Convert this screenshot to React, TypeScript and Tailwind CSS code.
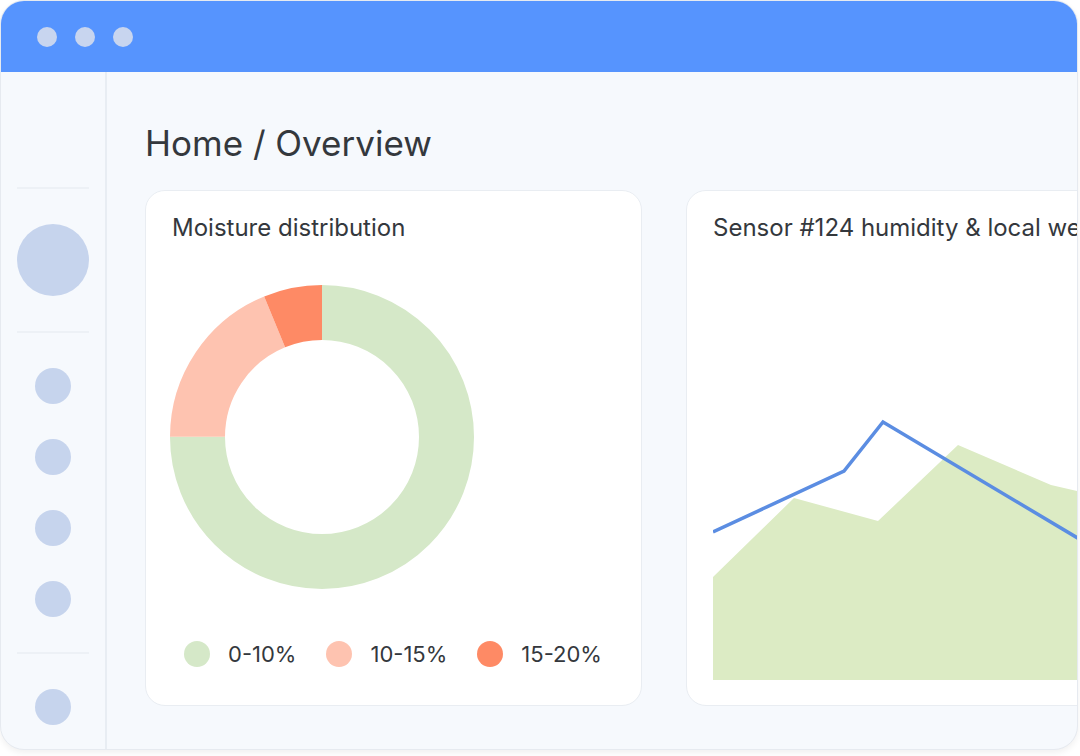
const font = { fontFamily: "Inter, 'Noto Sans', sans-serif" };

const R = 124.5;
const C = 2 * Math.PI * R;

const slices = [
  { color: "#d5e8c8", from: 0, to: 0.75 },
  { color: "#fec3b0", from: 0.75, to: 0.9375 },
  { color: "#fe8a65", from: 0.9375, to: 1 },
];

const legend = [
  { label: "0-10%", color: "bg-[#d5e8c8]" },
  { label: "10-15%", color: "bg-[#fec3b0]" },
  { label: "15-20%", color: "bg-[#fe8a65]" },
];

function Donut() {
  return (
    <svg width="304" height="304" viewBox="0 0 304 304" className="-ml-[2px]">
      <g transform="rotate(-90 152 152)">
        {slices.map((s) => (
          <circle
            key={s.color}
            cx="152"
            cy="152"
            r={R}
            fill="none"
            stroke={s.color}
            strokeWidth="55"
            strokeDasharray={`${(s.to - s.from) * C} ${C}`}
            strokeDashoffset={-s.from * C}
          />
        ))}
      </g>
    </svg>
  );
}

function AreaChart() {
  return (
    <svg width="445" height="420" viewBox="0 0 445 420" className="block">
      <polygon
        points="0,317 81,238 165,261 245,185 338,225 368,232 445,250 445,420 0,420"
        fill="#dcebc4"
      />
      <polyline
        points="0,272 131,211 170,162 368,280 445,326"
        fill="none"
        stroke="#5b8de2"
        strokeWidth="3.5"
      />
    </svg>
  );
}

function Divider() {
  return <div className="h-[2px] w-[72px] bg-[#edf1f6]" />;
}

function Dot() {
  return <div className="h-9 w-9 rounded-full bg-[#c6d4ed]" />;
}

export default function App() {
  return (
    <div className="h-[756px] w-[1080px] bg-white" style={font}>
      <div className="flex h-[750px] w-[1078px] flex-col overflow-hidden rounded-[24px] border border-[#e6eaf0] bg-[#f6f9fd] shadow-[0_3px_6px_rgba(0,0,0,0.06)]">
        {/* title bar */}
        <div className="flex h-[71px] shrink-0 items-center gap-[18px] bg-[#5694fe] pl-[36px]">
          <div className="h-5 w-5 rounded-full bg-[#c8d5ef]" />
          <div className="h-5 w-5 rounded-full bg-[#c8d5ef]" />
          <div className="h-5 w-5 rounded-full bg-[#c8d5ef]" />
        </div>

        <div className="flex flex-1">
          {/* sidebar */}
          <aside className="flex w-[106px] shrink-0 flex-col items-center gap-[35px] border-r-2 border-[#e8edf3] pt-[115px]">
            <Divider />
            <div className="h-[72px] w-[72px] rounded-full bg-[#c6d4ed]" />
            <Divider />
            <Dot />
            <Dot />
            <Dot />
            <Dot />
            <Divider />
            <Dot />
          </aside>

          {/* main */}
          <main className="min-w-0 flex-1 overflow-hidden pl-[38px] pt-[49px]">
            <h1 className="text-[35px] leading-[44px] text-[#34383d]">Home / Overview</h1>

            <div className="mt-[25px] flex gap-[44px]">
              <section className="flex h-[516px] w-[497px] shrink-0 flex-col rounded-[20px] border border-[#e9edf2] bg-white px-[26px] pt-[22px]">
                <h2 className="text-[24px] leading-[30px] text-[#34383d]">Moisture distribution</h2>
                <div className="mt-[42px]">
                  <Donut />
                </div>
                <div className="ml-[12px] mt-[52px] flex items-center">
                  {legend.map((l, i) => (
                    <div key={l.label} className={`flex items-center gap-[18px] ${i > 0 ? "ml-[30px]" : ""}`}>
                      <div className={`h-[26px] w-[26px] rounded-full ${l.color}`} />
                      <span className="text-[22px] leading-[26px] text-[#34383d]">{l.label}</span>
                    </div>
                  ))}
                </div>
              </section>

              <section className="flex h-[516px] w-[497px] shrink-0 flex-col rounded-[20px] border border-[#e9edf2] bg-white px-[26px] pb-[25px] pt-[22px]">
                <h2 className="whitespace-nowrap text-[24px] leading-[30px] text-[#34383d]">
                  Sensor #124 humidity &amp; local weather
                </h2>
                <div className="mt-auto">
                  <AreaChart />
                </div>
              </section>
            </div>
          </main>
        </div>
      </div>
    </div>
  );
}
